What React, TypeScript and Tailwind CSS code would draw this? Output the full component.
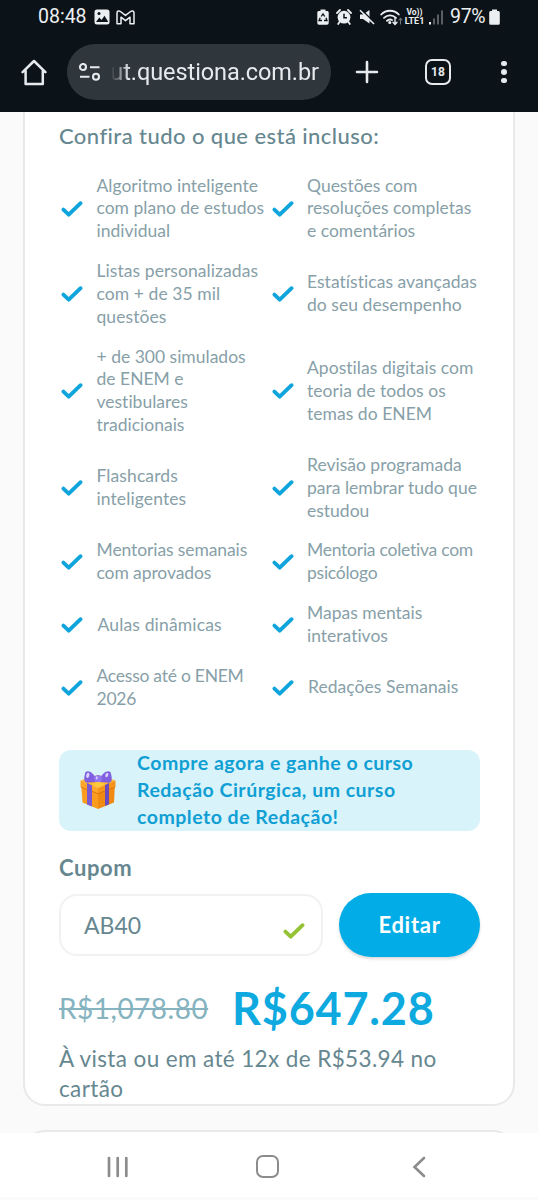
import type { ReactNode } from 'react'

interface Feature {
  lines: string[]
  className?: string
}

const features: Feature[] = [
  { lines: ['Algoritmo inteligente', 'com plano de estudos', 'individual'] },
  { lines: ['Questões com', 'resoluções completas', 'e comentários'] },
  { lines: ['Listas personalizadas', 'com + de 35 mil', 'questões'], className: 'tracking-[0.07px]' },
  { lines: ['Estatísticas avançadas', 'do seu desempenho'], className: 'tracking-[0.04px]' },
  { lines: ['+ de 300 simulados', 'de ENEM e', 'vestibulares', 'tradicionais'] },
  { lines: ['Apostilas digitais com', 'teoria de todos os', 'temas do ENEM'], className: 'tracking-[0.04px]' },
  { lines: ['Flashcards', 'inteligentes'], className: 'tracking-[0.1px]' },
  { lines: ['Revisão programada', 'para lembrar tudo que', 'estudou'] },
  { lines: ['Mentorias semanais', 'com aprovados'], className: 'tracking-[-0.1px]' },
  { lines: ['Mentoria coletiva com', 'psicólogo'], className: 'tracking-[-0.25px]' },
  { lines: ['Aulas dinâmicas'], className: 'pl-px tracking-[0.15px]' },
  { lines: ['Mapas mentais', 'interativos'] },
  { lines: ['Acesso até o ENEM', '2026'], className: 'tracking-[-0.25px]' },
  { lines: ['Redações Semanais'], className: 'pl-px tracking-[0.05px]' },
]

function CheckMark({ className }: { className?: string }) {
  return (
    <svg viewBox="0 0 24 18" className={`h-[18px] w-6 shrink-0 ${className ?? ''}`} fill="none">
      <path d="M3.4 9.600 8.7 14.600 20.6 3.200" stroke="currentColor" strokeWidth="3.9" strokeLinecap="round" strokeLinejoin="round" />
    </svg>
  )
}

function GiftIcon() {
  return (
    <svg viewBox="0 0 36 40" className="h-10 w-9 shrink-0">
      <path d="M1 13 18 21V39L2.500 32.500Z" fill="#fb9c1f" />
      <path d="M35 13 18 21V39L34 32.500Z" fill="#f08a12" />
      <path d="M0.500 10.500 18 5 35.500 10.500 18 18Z" fill="#ffb62c" />
      <path d="M0.500 10.500 18 18V23.500L0.500 17Z" fill="#ffa629" />
      <path d="M35.500 10.500 18 18V23.500L35.500 17Z" fill="#f59418" />
      <path d="M1 17.200 18 23.700 35 17.200" stroke="#d87510" strokeWidth="0.900" fill="none" />
      <path d="M7 13 12 15.200V36.600L7 34.500Z" fill="#7b59d0" />
      <path d="M29 13 25 15V36L29 34.300Z" fill="#694abf" />
      <path d="M12 14 18 11.500 25 14 18 17.500Z" fill="#ffc93e" />
      <path d="M17 11C14 1 5 -1 5 4 3 11 5 13.500 9 12.500L17 12Z" fill="#8060e0" />
      <path d="M19 11C22 1 31 -1 31 4 33 11 31 13.500 27 12.500L19 12Z" fill="#8060e0" />
      <path d="M14 8C14 4 22 4 22 8L21 12H15Z" fill="#9377ee" />
      <path d="M7.500 3C10 1.500 10 7 7.500 8 5.500 8 6 4 7.500 3Z" fill="#dcd4ff" />
      <path d="M26 3.500C29 1.500 29 5 27 7 25 8 25 5 26 3.500Z" fill="#dcd4ff" />
      <path d="M16.500 6.500C18 5.500 18 8.500 17 9.500 15.500 9.500 15.500 7.500 16.500 6.500Z" fill="#dcd4ff" />
    </svg>
  )
}

function StatusBar() {
  return (
    <div className="flex h-[34px] items-center pl-[38px] pr-[38px] text-[#eceff1]">
      <span className="w-[49px] whitespace-nowrap text-[19.5px] leading-none">08:48</span>
      <svg viewBox="0 0 16 16" className="ml-[7px] h-4 w-4 shrink-0">
        <rect x="0.5" y="0.500" width="15" height="15" rx="2.500" fill="currentColor" />
        <path d="M2 13 5.300 8.500 7.500 11 10.500 6.800 14 12.500V13Z" fill="#0c1318" />
        <circle cx="5" cy="4.600" r="1.500" fill="#0c1318" />
      </svg>
      <svg viewBox="0 0 19 15" className="ml-1.5 h-[15px] w-[19px] shrink-0" fill="none" stroke="currentColor" strokeWidth="1.500" strokeLinejoin="round">
        <path d="M1 13.800V3C1 .8 3 .5 4.400 1.500L9.500 5.400 14.600 1.500C16 .5 18 .8 18 3V13.800H14V7.200L9.500 10.700 5 7.200V13.800Z" />
      </svg>

      <div className="ml-auto flex items-center">
        <svg viewBox="0 0 12 16" className="h-4 w-3 shrink-0">
          <path d="M3.500 2V.5H8.500V2H10.500Q11.700 2 11.700 3.500V14Q11.700 15.700 10 15.700H2Q.3 15.700 .3 14V3.500Q.3 2 1.500 2Z" fill="currentColor" />
          <path d="M4.200 7.500 6 4.800 7.800 7.500M9 8.700 10 11.500H7M5 11.500H2L3.200 8.700" stroke="#0c1318" strokeWidth="1.300" fill="none" />
        </svg>
        <svg viewBox="0 0 16 16" className="ml-[7px] h-4 w-4 shrink-0">
          <circle cx="8" cy="8.200" r="6.400" fill="currentColor" />
          <path d="M1 4 4 1M15 4 12 1M3.500 13 2.200 15M12.500 13 13.800 15" stroke="currentColor" strokeWidth="1.800" strokeLinecap="round" />
          <path d="M8 4.700V8.700H11" stroke="#0c1318" strokeWidth="1.500" fill="none" />
        </svg>
        <svg viewBox="0 0 16 16" className="ml-[7px] h-4 w-4 shrink-0">
          <path d="M1 5.500H4L10.500 1V14.500L4 10H1Z" fill="currentColor" />
          <path d="M1.800 0 16 14.200" stroke="#0c1318" strokeWidth="1.500" />
          <path d="M1 1.300 15 15" stroke="currentColor" strokeWidth="1.600" />
        </svg>
        <svg viewBox="0 0 23 17" className="ml-[5px] h-[17px] w-[23px] shrink-0" fill="none" stroke="currentColor" strokeWidth="1.800" strokeLinecap="round">
          <path d="M1.200 5.500C6 .5 14 .5 18.800 5.500M4 8.800C7.500 5.500 12.500 5.500 16 8.800M7 11.800C8.500 10.500 10.500 10.300 12 11" />
          <circle cx="9.800" cy="13.500" r="0.700" fill="currentColor" />
          <path d="M15 9.500V15M13 13.200 15 15.400 17 13.200" strokeWidth="1.400" />
          <path d="M20.500 15V9.500M19 11 20.500 9.300 22 11" strokeWidth="1.100" opacity="0.450" />
        </svg>
        <div className="ml-px flex w-[21px] flex-col items-center whitespace-nowrap font-bold">
          <span className="text-[8.500px] leading-[9px]">Vo))</span>
          <span className="text-[9px] leading-[9px]">LTE1</span>
        </div>
        <svg viewBox="0 0 14 15" className="ml-1 h-[15px] w-3.5 shrink-0" fill="currentColor">
          <rect x="0" y="12" width="2" height="2.500" />
          <rect x="4" y="8.500" width="2" height="6" opacity="0.350" />
          <rect x="8" y="4.500" width="2" height="10" opacity="0.350" />
          <rect x="12" y="0.500" width="2" height="14" opacity="0.350" />
        </svg>
        <span className="ml-[7px] w-9 whitespace-nowrap text-[19.5px] leading-none tracking-[-0.3px]">97%</span>
        <svg viewBox="0 0 11 16" className="ml-[3px] h-4 w-[11px] shrink-0" fill="currentColor">
          <path d="M3 2V.5H8V2H9.500Q10.800 2 10.800 3.500V14.300Q10.800 15.800 9.300 15.800H1.700Q.2 15.800 .2 14.300V3.500Q.2 2 1.500 2Z" />
        </svg>
      </div>
    </div>
  )
}

function BrowserBar() {
  return (
    <div className="flex h-[78px] items-center pb-1 pt-[2px] text-[#e6eaed]">
      <svg viewBox="0 0 26 27" className="ml-[21px] h-[27px] w-[26px] shrink-0" fill="none" stroke="currentColor" strokeWidth="2.500" strokeLinejoin="round" strokeLinecap="round">
        <path d="M1.600 13.200 13 2 24.400 13.200M4.600 11.500V25H21.800V11.500" />
      </svg>
      <div className="ml-5 flex h-14 w-[264px] items-center rounded-full bg-[#2f363c] pl-3 pr-3">
        <svg viewBox="0 0 22 18" className="h-[18px] w-[22px] shrink-0" fill="none" stroke="currentColor" strokeWidth="2.100">
          <circle cx="4" cy="4" r="3" />
          <path d="M11 4.200H20.500M1 13.800H10.500" />
          <circle cx="17" cy="13.800" r="3" />
        </svg>
        <div className="ml-2.5 flex flex-1 justify-end overflow-hidden [mask-image:linear-gradient(to_right,transparent_0px,black_18px)]">
          <span className="whitespace-nowrap text-[23.5px] leading-7 tracking-[-0.08px]">out.questiona.com.br</span>
        </div>
      </div>
      <svg viewBox="0 0 24 24" className="ml-[24px] h-6 w-6 shrink-0" stroke="currentColor" strokeWidth="2.600" strokeLinecap="round">
        <path d="M12 2V22M2 12H22" />
      </svg>
      <div className="ml-[46px] flex h-[26px] w-[26px] items-center justify-center rounded-[7px] border-[2.5px] border-[#e6eaed] text-xs font-bold leading-none">
        18
      </div>
      <div className="ml-[50px] flex flex-col gap-[3px]">
        <i className="h-[5.500px] w-[5.500px] rounded-full bg-[#e6eaed]" />
        <i className="h-[5.500px] w-[5.500px] rounded-full bg-[#e6eaed]" />
        <i className="h-[5.500px] w-[5.500px] rounded-full bg-[#e6eaed]" />
      </div>
    </div>
  )
}

function FeatureItem({ children, className }: { children: ReactNode; className?: string }) {
  return (
    <li className="flex items-center">
      <CheckMark className="ml-px text-[#0fa5dc]" />
      <div className={`ml-[12.500px] whitespace-nowrap text-[17.5px] leading-[22.850px] text-[#87a0a8] ${className ?? ''}`}>
        {children}
      </div>
    </li>
  )
}

export default function App() {
  return (
    <div className="flex h-[1200px] w-[538px] flex-col overflow-hidden bg-[#fafafa] font-[Lato,sans-serif] [font-variant-ligatures:none]">
      <header className="h-28 shrink-0 bg-[#0c1318] font-[Roboto,sans-serif]">
        <StatusBar />
        <BrowserBar />
      </header>

      <main className="h-[1021px] shrink-0 overflow-hidden">
        <section className="mx-[23px] h-[994px] rounded-b-[22px] border-2 border-t-0 border-[#e9e9e9] bg-white px-[34px]">
          <h2 className="whitespace-nowrap pt-[9px] text-[22px] font-medium leading-[30px] tracking-[0.43px] text-[#668790]">
            Confira tudo o que está incluso:
          </h2>

          <ul className="mt-[23.500px] grid grid-cols-[210.500px_210.500px] gap-y-[17px]">
            {features.map((feature) => (
              <FeatureItem key={feature.lines[0]} className={feature.className}>
                {feature.lines.map((line) => (
                  <div key={line}>{line}</div>
                ))}
              </FeatureItem>
            ))}
          </ul>

          <div className="mt-[39px] flex h-[81px] w-[421px] items-center rounded-xl bg-[#d8f3fa] pl-[21px]">
            <GiftIcon />
            <p className="-mt-0.5 ml-[21px] whitespace-nowrap text-[19.5px] font-bold leading-[27px] tracking-[0.5px] text-[#109fd4]">
              Compre agora e ganhe o curso
              <br />
              Redação Cirúrgica, um curso
              <br />
              completo de Redação!
            </p>
          </div>

          <label className="mt-[22px] block text-[22px] font-bold leading-[30px] tracking-[0.6px] text-[#668790]">Cupom</label>

          <div className="mt-[10px] flex w-[421px] items-center justify-between">
            <div className="mt-px flex h-[62px] w-[264px] items-center justify-between rounded-[18px] border-2 border-[#f2f2f2] pl-[23px] pr-[15px] text-[23px] text-[#668790]">
              <span>AB40</span>
              <CheckMark className="mt-[12px] text-[#93c234]" />
            </div>
            <button className="h-16 w-[141px] rounded-full bg-[#02ace6] text-[22px] font-bold tracking-[0.7px] text-white shadow-[0_2px_3px_rgba(0,0,0,0.15)]">
              Editar
            </button>
          </div>

          <div className="mt-[21px] flex h-[60px] items-center whitespace-nowrap">
            <span className="w-[173px] text-[28px] text-[#85b3bf] line-through">
              <span className="tracking-[0.5px]">R$1,078.80</span>
            </span>
            <span className="text-[45px] font-bold leading-[60px] tracking-[0.8px] text-[#0da9df]">R$647.28</span>
          </div>

          <p className="mt-[6px] whitespace-nowrap text-[22.5px] leading-[30.500px] tracking-[0.38px] text-[#668790]">
            À vista ou em até 12x de R$53.94 no
            <br />
            cartão
          </p>
        </section>
        <section className="mx-[23px] mt-6 h-20 rounded-t-[22px] border-2 border-[#e9e9e9] bg-white" />
      </main>

      <nav className="flex h-[67px] shrink-0 items-center border-b-[3px] border-[#fafafa] bg-white pt-[3px] text-[#8c8c8c]">
        <svg viewBox="0 0 22 22" className="ml-[107px] h-[22px] w-[22px]" stroke="currentColor" strokeWidth="2.700" strokeLinecap="round">
          <path d="M2 2V20M10.700 2V20M19.300 2V20" />
        </svg>
        <div className="ml-[127px] h-[23px] w-[23px] rounded-[7px] border-[2.500px] border-[#8c8c8c]" />
        <svg viewBox="0 0 14 22" className="ml-[133px] h-[22px] w-3.5" fill="none" stroke="currentColor" strokeWidth="2.600" strokeLinecap="round">
          <path d="M12 2 2.500 11 12 20" />
        </svg>
      </nav>
    </div>
  )
}
